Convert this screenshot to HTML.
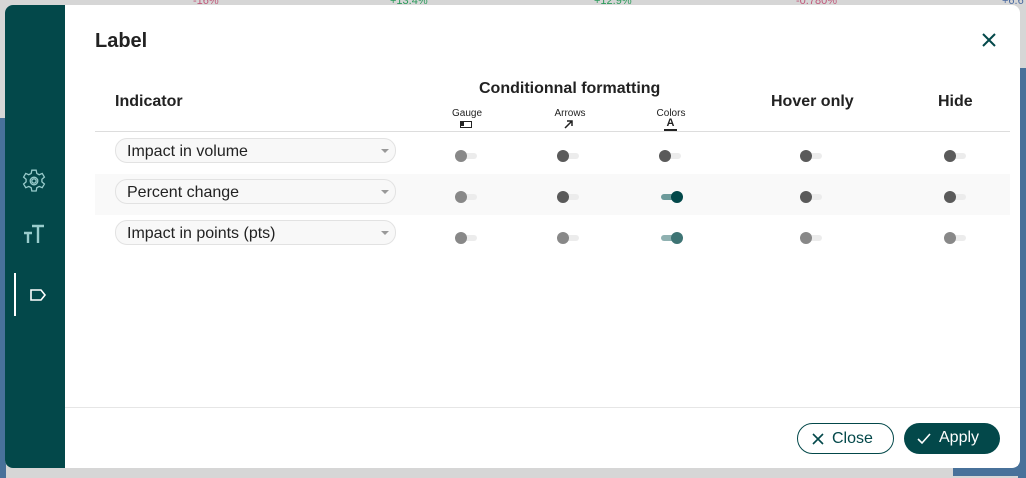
<!DOCTYPE html>
<html><head><style>
*{box-sizing:border-box;margin:0;padding:0}
body{width:1026px;height:475px;position:relative;overflow:hidden;background:#d6d6d6;font-family:"Liberation Sans",sans-serif;color:#222}
.bgblue{position:absolute;background:#48719a}
.dlg{position:absolute;left:5px;top:5px;width:1015px;height:463px;background:#fff;border-radius:8px;overflow:hidden}
.side{position:absolute;left:0;top:0;width:60px;height:463px;background:#03484a}
.abs{position:absolute}
.h{font-weight:bold;font-size:16px;position:absolute}
.tg{position:absolute;width:22px;height:12px}
.tg .tr{position:absolute;left:4px;top:3px;width:18px;height:6px;border-radius:3px;background:#ececec}
.tg .k{position:absolute;left:0;top:0;width:12px;height:12px;border-radius:50%;background:#5a5a5a}
.tg.l .k{background:#888}
.tg.on .tr{background:#6d9b9b;left:0}
.tg.on .k{left:10px;background:#03484a}
.tg.on2 .tr{background:#8fb1b1;left:0}
.tg.on2 .k{left:10px;background:#3e7474}
.sel{position:absolute;left:110px;width:281px;height:25px;border:1px solid #e2e2e2;border-radius:12px;background:#f8f8f8;font-size:16px;padding:4px 0 0 11px;color:#222}
.sel:after{content:"";position:absolute;right:6px;top:10px;border-left:4px solid transparent;border-right:4px solid transparent;border-top:4px solid #999}
.sm{position:absolute;font-size:10px;text-align:center;width:40px}
</style></head><body>
<div class="bgblue" style="left:1018px;top:68px;width:10px;height:410px"></div>
<div class="bgblue" style="left:0;top:118px;width:6px;height:360px"></div>
<div class="bgblue" style="left:953px;top:466px;width:80px;height:10px"></div>
<div class="abs" style="left:193px;top:-5px;font-size:11px;color:#c0587a">-16%</div>
<div class="abs" style="left:390px;top:-5px;font-size:11px;color:#2a9a5a">+13.4%</div>
<div class="abs" style="left:594px;top:-5px;font-size:11px;color:#2a9a5a">+12.9%</div>
<div class="abs" style="left:796px;top:-5px;font-size:11px;color:#c0587a">-0.780%</div>
<div class="abs" style="left:1002px;top:-5px;font-size:11px;color:#4a6aa0">+6.6</div>
<div class="dlg">
 <div class="side">
  <svg class="abs" style="left:16px;top:163px" width="26" height="26" viewBox="0 0 24 24" fill="none" stroke="#9cc" stroke-width="1.2"><path d="M10 2h4l.6 3 2.2 1.2 2.8-1.2 2 3.4-2.3 2v2.4l2.3 2-2 3.4-2.8-1.2-2.2 1.2-.6 3h-4l-.6-3-2.2-1.2-2.8 1.2-2-3.4 2.3-2v-2.4l-2.3-2 2-3.4 2.8 1.2 2.2-1.2z"/><circle cx="12" cy="12" r="3.5"/><circle cx="12" cy="12" r="2"/></svg>
  <svg class="abs" style="left:18px;top:219px" width="22" height="20" viewBox="0 0 22 20" fill="none" stroke="#9cc" stroke-width="2.4"><path d="M1 9h8M5 9v10M9 2h12M15 2v17"/></svg>
  <div class="abs" style="left:9px;top:268px;width:2px;height:43px;background:#fff"></div>
  <svg class="abs" style="left:24px;top:283px" width="20" height="14" viewBox="0 0 20 14" fill="none" stroke="#fff" stroke-width="1.6"><path d="M2 2h10l4 5-4 5H2z"/></svg>
 </div>
 <div class="abs" style="left:90px;top:25px;font-size:20px;font-weight:bold">Label</div>
 <svg class="abs" style="left:976px;top:27px" width="16" height="16" viewBox="0 0 16 16" stroke="#03484a" stroke-width="2"><path d="M2 2l12 12M14 2L2 14"/></svg>
 <div class="h" style="left:110px;top:88px">Indicator</div>
 <div class="h" style="left:474px;top:75px">Conditionnal formatting</div>
 <div class="h" style="left:766px;top:88px">Hover only</div>
 <div class="h" style="left:933px;top:88px">Hide</div>
 <div class="sm" style="left:442px;top:103px">Gauge</div>
 <div class="abs" style="left:455px;top:116px;width:12px;height:7px;border:1.5px solid #222"><div style="width:3px;height:4px;background:#222"></div></div>
 <div class="sm" style="left:545px;top:103px">Arrows</div>
 <svg class="abs" style="left:559px;top:115px" width="9" height="9" viewBox="0 0 9 9" stroke="#222" stroke-width="1.5" fill="none"><path d="M1 8L8 1M3 1h5v5"/></svg>
 <div class="sm" style="left:646px;top:103px">Colors</div>
 <div class="abs" style="left:659px;top:113px;font-size:11px;font-weight:bold;width:13px;text-align:center;border-bottom:2px solid #222;line-height:11px">A</div>
 <div class="abs" style="left:90px;top:126px;width:915px;height:1px;background:#ddd"></div>
 <div class="abs" style="left:90px;top:169px;width:915px;height:41px;background:#f9f9f9"></div>
 <div class="sel" style="top:133px">Impact in volume</div>
 <div class="sel" style="top:174px">Percent change</div>
 <div class="sel" style="top:215px">Impact in points (pts)</div>

 <div class="tg l" style="left:450px;top:145px"><div class="tr"></div><div class="k"></div></div>
 <div class="tg" style="left:552px;top:145px"><div class="tr"></div><div class="k"></div></div>
 <div class="tg" style="left:654px;top:145px"><div class="tr"></div><div class="k"></div></div>
 <div class="tg" style="left:795px;top:145px"><div class="tr"></div><div class="k"></div></div>
 <div class="tg" style="left:939px;top:145px"><div class="tr"></div><div class="k"></div></div>

 <div class="tg l" style="left:450px;top:186px"><div class="tr"></div><div class="k"></div></div>
 <div class="tg" style="left:552px;top:186px"><div class="tr"></div><div class="k"></div></div>
 <div class="tg on" style="left:656px;top:186px"><div class="tr"></div><div class="k"></div></div>
 <div class="tg" style="left:795px;top:186px"><div class="tr"></div><div class="k"></div></div>
 <div class="tg" style="left:939px;top:186px"><div class="tr"></div><div class="k"></div></div>

 <div class="tg l" style="left:450px;top:227px"><div class="tr"></div><div class="k"></div></div>
 <div class="tg l" style="left:552px;top:227px"><div class="tr"></div><div class="k"></div></div>
 <div class="tg on2" style="left:656px;top:227px"><div class="tr"></div><div class="k"></div></div>
 <div class="tg l" style="left:795px;top:227px"><div class="tr"></div><div class="k"></div></div>
 <div class="tg l" style="left:939px;top:227px"><div class="tr"></div><div class="k"></div></div>

 <div class="abs" style="left:60px;top:402px;width:955px;height:1px;background:#e6e6e6"></div>
 <div class="abs" style="left:792px;top:418px;width:97px;height:31px;border:1px solid #03484a;border-radius:16px;font-size:16px;padding:6px 0 0 34px;color:#03484a">Close</div>
 <svg class="abs" style="left:807px;top:428px" width="12" height="12" viewBox="0 0 12 12" stroke="#03484a" stroke-width="1.6"><path d="M1 1l10 10M11 1L1 11"/></svg>
 <div class="abs" style="left:899px;top:418px;width:96px;height:31px;background:#03484a;border-radius:16px;font-size:16px;padding:6px 0 0 35px;color:#fff">Apply</div>
 <svg class="abs" style="left:912px;top:428px" width="14" height="12" viewBox="0 0 14 12" stroke="#fff" stroke-width="1.6" fill="none"><path d="M1 6l4 4 8-9"/></svg>
</div>
</body></html>
